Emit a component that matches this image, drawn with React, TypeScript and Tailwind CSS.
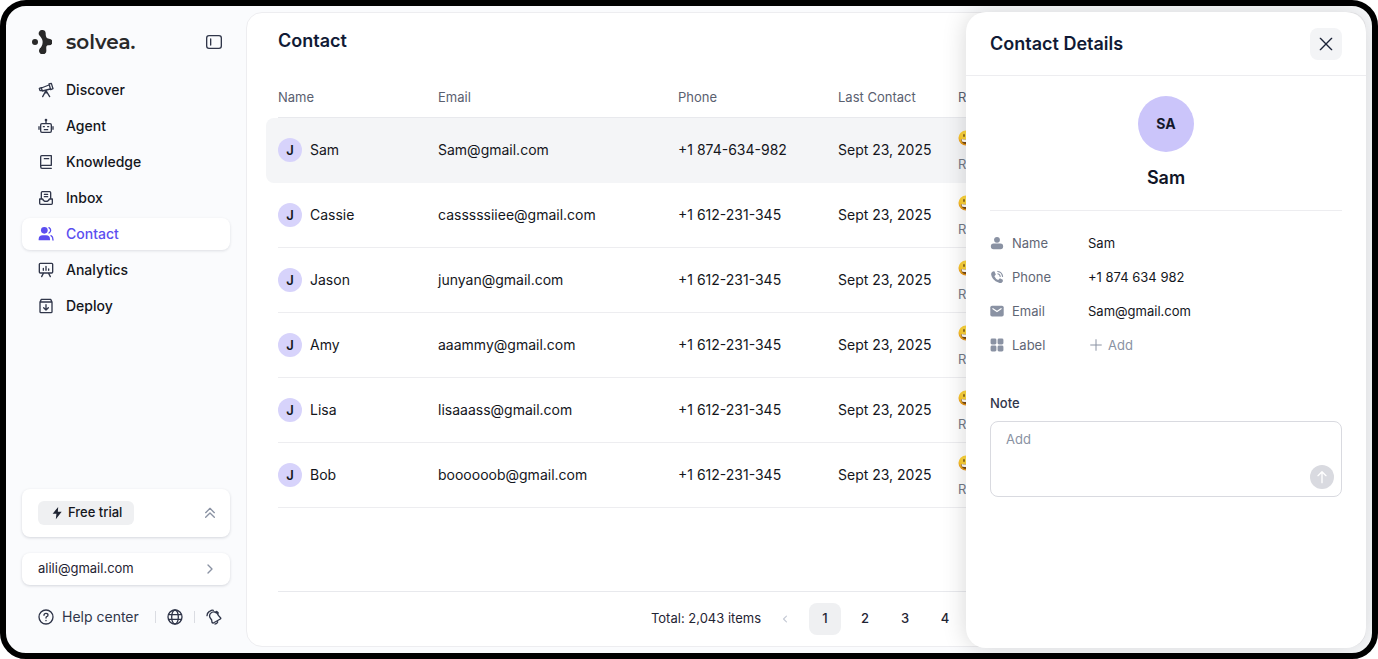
import { useState, type ReactNode } from 'react'

interface Contact {
  name: string
  email: string
  phone: string
  lastContact: string
}

const contacts: Contact[] = [
  { name: 'Sam', email: 'Sam@gmail.com', phone: '+1 874-634-982', lastContact: 'Sept 23, 2025' },
  { name: 'Cassie', email: 'casssssiiee@gmail.com', phone: '+1 612-231-345', lastContact: 'Sept 23, 2025' },
  { name: 'Jason', email: 'junyan@gmail.com', phone: '+1 612-231-345', lastContact: 'Sept 23, 2025' },
  { name: 'Amy', email: 'aaammy@gmail.com', phone: '+1 612-231-345', lastContact: 'Sept 23, 2025' },
  { name: 'Lisa', email: 'lisaaass@gmail.com', phone: '+1 612-231-345', lastContact: 'Sept 23, 2025' },
  { name: 'Bob', email: 'boooooob@gmail.com', phone: '+1 612-231-345', lastContact: 'Sept 23, 2025' },
]

// All line icons share a 48 unit grid
function Icon({ children, className = 'size-4', width = 4 }: { children: ReactNode; className?: string; width?: number }) {
  return (
    <svg
      viewBox="0 0 48 48"
      className={`shrink-0 ${className}`}
      fill="none"
      stroke="currentColor"
      strokeWidth={width}
      strokeLinecap="round"
      strokeLinejoin="round"
      aria-hidden="true"
    >
      {children}
    </svg>
  )
}

const navItems = [
  {
    label: 'Discover',
    icon: (
      <Icon>
        <path d="M33 6l7-2 5 16-7 3zM33 9L10 18l3 9 24-6M10 17l-6 2 2 7 6-1M24 26L14 44M24 26l11 18M24 25v8" />
      </Icon>
    ),
  },
  {
    label: 'Agent',
    icon: (
      <Icon>
        <rect x="8" y="17" width="32" height="26" rx="4" />
        <path d="M24 8v8M3 26v8M45 26v8M16 26h3M29 26h3M19 35h10" />
        <circle cx="24" cy="6" r="2" />
      </Icon>
    ),
  },
  {
    label: 'Knowledge',
    icon: (
      <Icon>
        <path d="M8 39V8q0-3 3-3h29v29H12q-4 0-4 4.500T12 43h28M19 14h13" />
      </Icon>
    ),
  },
  {
    label: 'Inbox',
    icon: (
      <Icon>
        <path d="M10 24V8q0-3 3-3h22q3 0 3 3v16M19 13h10M19 20h10M5 27h9q2 7 10 7t10-7h9v13q0 3-3 3H8q-3 0-3-3z" />
      </Icon>
    ),
  },
  {
    label: 'Contact',
    icon: (
      <Icon>
        <circle cx="19" cy="13" r="10" fill="currentColor" stroke="none" />
        <path d="M2 43v-3q0-12 12-12h10q12 0 12 12v3z" fill="currentColor" stroke="none" />
        <path d="M33 5q5 3 5 8t-5 8M39 29q6 3 6 13" />
      </Icon>
    ),
  },
  {
    label: 'Analytics',
    icon: (
      <Icon>
        <rect x="4" y="4" width="40" height="29" rx="3" />
        <path d="M16 19v6M24 13v12M32 21v4M16 34l-5 10M32 34l5 10" />
      </Icon>
    ),
  },
  {
    label: 'Deploy',
    icon: (
      <Icon>
        <path d="M6 12l4-8h28l4 8v29q0 3-3 3H9q-3 0-3-3zM6 12h36M24 20v15M17 29l7 7 7-7" />
      </Icon>
    ),
  },
]

function Smiley() {
  return (
    <svg viewBox="0 0 32 32" className="block size-4" aria-hidden="true">
      <defs>
        <radialGradient id="face" cx="0.5" cy="0.3" r="0.7">
          <stop offset="0" stopColor="#ffe650" />
          <stop offset="0.65" stopColor="#fbc62c" />
          <stop offset="1" stopColor="#e58a10" />
        </radialGradient>
      </defs>
      <circle cx="16" cy="16" r="15" fill="url(#face)" />
      <ellipse cx="12" cy="11" rx="1.500" ry="3.500" fill="#7a5012" />
      <ellipse cx="20" cy="11" rx="1.500" ry="3.500" fill="#7a5012" />
      <path d="M6 18q10 2 20 0-1 10-10 10T6 18z" fill="#7a4a12" />
      <path d="M7 18q9 2 18 0l-1 5q-8 2-16 0z" fill="#fff" />
    </svg>
  )
}

function Logo() {
  return (
    <a href="#" className="flex items-center gap-3.5 text-[#292929]">
      <svg viewBox="0 0 60 72" className="h-6 w-5" fill="currentColor" aria-hidden="true">
        <circle cx="9" cy="36" r="9" />
        <path d="M31 0a10 10 0 0 1 10 9c0 7 1 13 5 16 2 1 3 1 5 1a10 10 0 0 1 0 20c-2 0-5 0-7 2-2 3-1 7-1 13a11 11 0 1 1-19-6c3-3 8-9 8-19s-5-13-9-19A10 10 0 0 1 31 0z" />
      </svg>
      <span className="font-[Montserrat,Inter,sans-serif] text-xl leading-6 font-semibold">solvea.</span>
    </a>
  )
}

function Sidebar() {
  return (
    <aside className="flex w-60 shrink-0 flex-col px-4 pt-4 pb-5">
      <div className="mb-5 flex h-10 items-center justify-between pr-2 pl-2.5">
        <Logo />
        <button type="button" aria-label="Collapse sidebar" className="text-[#30364a]">
          <Icon>
            <rect x="2" y="5" width="44" height="38" rx="7" />
            <path d="M14 15v18" />
          </Icon>
        </button>
      </div>

      <nav className="-mt-2 flex flex-col gap-1">
        {navItems.map(({ label, icon }) => (
          <a
            key={label}
            href="#"
            aria-current={label === 'Contact' ? 'page' : undefined}
            className={`flex h-8 items-center gap-3 rounded-lg px-4 text-sm font-medium ${
              label === 'Contact'
                ? 'bg-white text-[#5b4ef0] shadow-[0_1px_3px_rgba(20,25,50,0.12)]'
                : 'text-[#14161c]'
            }`}
          >
            <span className={label === 'Contact' ? '' : 'text-[#30364a]'}>{icon}</span>
            {label}
          </a>
        ))}
      </nav>

      <div className="mt-auto flex h-12 items-center justify-between rounded-lg bg-white pr-3 pl-4 shadow-[0_1px_3px_rgba(20,25,50,0.16)]">
        <span className="flex h-6 items-center gap-1 rounded-md bg-[#eff0f2] px-3 text-[13px] font-medium text-[#14161c]">
          <svg viewBox="0 0 42 48" className="h-3.5 w-3.5" fill="#1f2433" aria-hidden="true">
            <path d="M25 3L6 27h13l-2 18 20-25H24z" />
          </svg>
          Free trial
        </span>
        <button type="button" aria-label="Expand plan" className="text-[#8a92a3]">
          <Icon>
            <path d="M11 23l13-13 13 13M11 37l13-13 13 13" />
          </Icon>
        </button>
      </div>

      <button
        type="button"
        className="mt-4 flex h-8 items-center justify-between rounded-lg bg-white pr-3 pl-4 text-[13px] text-[#1f2433] shadow-[0_1px_3px_rgba(20,25,50,0.16)]"
      >
        alili@gmail.com
        <Icon className="size-4 text-[#8a92a3]">
          <path d="M18 12l12 12-12 12" />
        </Icon>
      </button>

      <div className="mt-4 flex h-8 items-center justify-between pr-2 pl-4 text-[#30364a]">
        <a href="#" className="flex items-center gap-2 text-sm">
          <Icon>
            <circle cx="24" cy="24" r="21" />
            <path d="M18 19q0-6 6-6t6 5q0 4-4 5-2 1-2 4M24 34v1" />
          </Icon>
          Help center
        </a>
        <div className="flex items-center gap-[11px]">
          <span className="h-3 w-px bg-[#dadce2]" />
          <button type="button" aria-label="Language">
            <Icon width={4}>
              <circle cx="24" cy="24" r="21" />
              <ellipse cx="24" cy="24" rx="10" ry="21" />
              <path d="M5 17h38M5 31h38" />
            </Icon>
          </button>
          <span className="h-3 w-px bg-[#dadce2]" />
          <button type="button" aria-label="Notifications">
            <Icon>
              <path d="M13 14q5-6 13-5 9 2 11 10l7 8q1 2-1 3L22 42q-3 1-4-2l-1-7-5-7q-3-7 1-12zM3 20q0-8 7-13M13 6q4-4 9-2M31 7q4 1 6 5M27 45q6 0 8-6" />
            </Icon>
          </button>
        </div>
      </div>
    </aside>
  )
}

function ContactTable({ selected, onSelect }: { selected: string; onSelect: (name: string) => void }) {
  return (
    <table className="w-full table-fixed border-separate border-spacing-0 text-left">
      <thead>
        <tr className="h-[39px] text-[13px] text-[#5a6070] *:border-b *:border-[#e8e9ed] *:font-normal">
          <th className="w-40">Name</th>
          <th className="w-60">Email</th>
          <th className="w-40">Phone</th>
          <th className="w-30">Last Contact</th>
          <th>Rating</th>
        </tr>
      </thead>
      <tbody>
        {contacts.map((contact) => {
          const active = contact.name === selected
          return (
            <tr
              key={contact.name}
              onClick={() => onSelect(contact.name)}
              className={`h-[65px] cursor-pointer text-sm text-[#14161c] *:border-b ${
                active ? 'bg-[#f4f5f7] *:border-[#f4f5f7]' : '*:border-[#ededf0]'
              }`}
            >
              <td
                className={
                  active
                    ? 'relative before:absolute before:top-0 before:-bottom-px before:-left-3 before:w-3 before:rounded-l-lg before:bg-[#f4f5f7]'
                    : ''
                }
              >
                <div className="flex items-center gap-2">
                  <span className="flex size-6 items-center justify-center rounded-full bg-[#d7d3fb] text-[13px] font-semibold">
                    J
                  </span>
                  {contact.name}
                </div>
              </td>
              <td>{contact.email}</td>
              <td>{contact.phone}</td>
              <td>{contact.lastContact}</td>
              <td>
                <div className="flex flex-col gap-2 pt-1 text-[13px] leading-5 text-[#737987]">
                  <Smiley />
                  <span>Resolved</span>
                </div>
              </td>
            </tr>
          )
        })}
      </tbody>
    </table>
  )
}

function Pagination() {
  const [page, setPage] = useState(1)

  return (
    <footer className="mt-auto flex h-[55px] items-center justify-center gap-2 border-t border-[#e8e9ed] text-[13px] text-[#1f2433]">
      <span>Total: 2,043 items</span>
      <button type="button" aria-label="Previous page" className="flex size-8 items-center justify-center text-[#c5cad5]">
        <Icon className="size-3.5">
          <path d="M29 14L19 24l10 10" />
        </Icon>
      </button>
      {[1, 2, 3, 4].map((n) => (
        <button
          key={n}
          type="button"
          onClick={() => setPage(n)}
          className={`size-8 rounded-lg font-medium ${n === page ? 'bg-[#eff0f2]' : ''}`}
        >
          {n}
        </button>
      ))}
    </footer>
  )
}

const fields = [
  {
    label: 'Name',
    value: 'Sam',
    icon: (
      <g fill="currentColor" stroke="none">
        <circle cx="24" cy="13" r="10" />
        <rect x="3" y="26" width="42" height="19" rx="9" />
      </g>
    ),
  },
  {
    label: 'Phone',
    value: '+1 874 634 982',
    icon: (
      <>
        <path
          d="M5 9q3-6 10-5l5 11-5 6q4 9 13 13l6-6 10 5q2 7-4 11-4 2-11-1Q7 34 4 16q0-5 1-7z"
          fill="currentColor"
          stroke="none"
        />
        <path d="M27 5q14 2 16 17M27 13q7 2 8 9" />
      </>
    ),
  },
  {
    label: 'Email',
    value: 'Sam@gmail.com',
    icon: (
      <>
        <rect x="1" y="6" width="46" height="37" rx="6" fill="currentColor" stroke="none" />
        <path d="M10 16l14 10 14-10" stroke="white" />
      </>
    ),
  },
  {
    label: 'Label',
    value: '',
    icon: (
      <g fill="currentColor" stroke="none">
        <rect x="2" y="2" width="20" height="20" rx="5" />
        <rect x="26" y="2" width="20" height="20" rx="5" />
        <rect x="2" y="26" width="20" height="20" rx="5" />
        <rect x="26" y="26" width="20" height="20" rx="5" />
      </g>
    ),
  },
]

function ContactDetails() {
  const [note, setNote] = useState('')

  return (
    <section
      aria-label="Contact Details"
      className="absolute top-1.5 right-1.5 bottom-[5px] w-100 rounded-[20px] bg-white shadow-[0_0_24px_rgba(0,0,0,0.16)]"
    >
      <header className="flex h-16 items-center justify-between border-b border-[#ededf0] px-6">
        <h2 className="pt-px text-lg font-semibold text-[#101a35]">Contact Details</h2>
        <button
          type="button"
          aria-label="Close"
          className="flex size-8 items-center justify-center rounded-lg bg-[#f3f4f6] text-[#1b2338]"
        >
          <Icon>
            <path d="M7 7l34 34M41 7L7 41" />
          </Icon>
        </button>
      </header>

      <div className="px-6 pt-5">
        <div className="flex flex-col items-center gap-3 border-b border-[#ededf0] pb-[18px]">
          <span className="flex size-14 items-center justify-center rounded-full bg-[#cbc5fa] text-sm font-bold text-[#14182b]">
            SA
          </span>
          <p className="text-lg leading-7 font-semibold text-[#101527]">Sam</p>
        </div>

        <dl className="mt-[22px] flex flex-col gap-3.5 text-[13px] leading-5">
          {fields.map(({ label, value, icon }) => (
            <div key={label} className="flex items-center">
              <dt className="flex w-[98px] items-center gap-2 text-[#5f6675]">
                <Icon className="size-3.5 text-[#8a92a3]">{icon}</Icon>
                {label}
              </dt>
              <dd className="text-[#14161c]">
                {value || (
                  <button type="button" className="flex items-center gap-1 text-[#8a92a3]">
                    <Icon width={3}>
                      <path d="M24 8v32M8 24h32" />
                    </Icon>
                    Add
                  </button>
                )}
              </dd>
            </div>
          ))}
        </dl>

        <label htmlFor="note" className="mt-[38px] block text-[13px] leading-5 font-medium text-[#30364a]">
          Note
        </label>
        <div className="relative mt-2">
          <textarea
            id="note"
            value={note}
            onChange={(e) => setNote(e.target.value)}
            placeholder="Add"
            className="block h-[76px] w-full resize-none rounded-lg border border-[#d9dae0] px-[15px] py-[7px] text-[13px] leading-5 outline-none placeholder:text-[#8a92a3]"
          />
          <button
            type="button"
            aria-label="Save note"
            className="absolute right-2 bottom-2 flex size-6 items-center justify-center rounded-full bg-[#d9dae0] text-white"
          >
            <Icon>
              <path d="M24 41V9M12 20L24 8l12 12" />
            </Icon>
          </button>
        </div>
      </div>
    </section>
  )
}

export default function App() {
  const [selected, setSelected] = useState('Sam')

  return (
    <div className="relative flex h-screen overflow-hidden rounded-[26px] border-6 border-black bg-[#fafbfd] font-[Inter,sans-serif]">
      <Sidebar />
      <main className="my-1.5 mr-1.5 flex min-w-0 flex-1 flex-col rounded-2xl border border-[#ededf0] bg-white px-[31px]">
        <h1 className="mt-3.5 mb-6 text-lg leading-7 font-semibold text-[#101a35]">Contact</h1>
        <ContactTable selected={selected} onSelect={setSelected} />
        <Pagination />
      </main>
      <ContactDetails />
    </div>
  )
}
